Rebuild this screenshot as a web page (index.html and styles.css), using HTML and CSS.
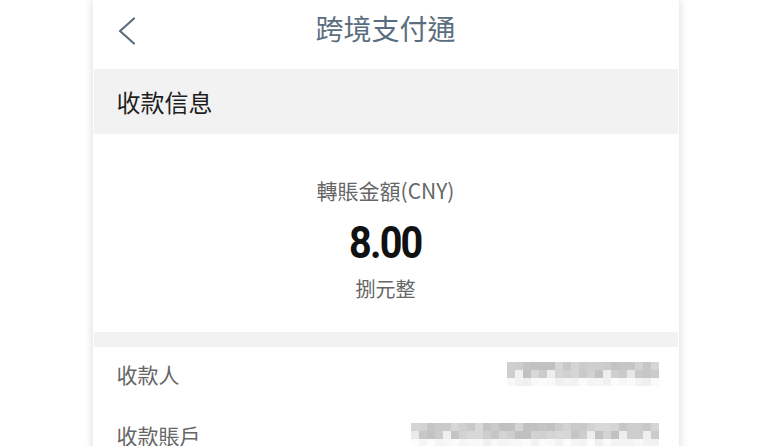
FILE: index.html
```html
<!DOCTYPE html>
<html lang="zh-Hant">
<head>
<meta charset="utf-8">
<title>跨境支付通</title>
<link rel="stylesheet" href="styles.css">
</head>
<body>
<div class="panel">
  <header class="topbar">
    <svg class="back" width="18" height="28" viewBox="0 0 18 28"><polyline points="16,1.5 2,14 16,26.5" fill="none" stroke="#5b6e80" stroke-width="2.2" stroke-linecap="round" stroke-linejoin="round"/></svg>
    <h1 class="title">跨境支付通</h1>
  </header>
  <div class="section-head">收款信息</div>
  <div class="amount">
    <div class="amount-label">轉賬金額(CNY)</div>
    <div class="amount-value">8.00</div>
    <div class="amount-words">捌元整</div>
  </div>
  <div class="divider"></div>
  <div class="row">
    <span class="row-label">收款人</span>
    <span class="blur" data-cols="19" data-seed="7"></span>
  </div>
  <div class="row">
    <span class="row-label">收款賬戶</span>
    <span class="blur" data-cols="31" data-seed="23"></span>
  </div>
</div>
<script src="script.js"></script>
</body>
</html>
```
FILE: styles.css
```css
html, body {
  margin: 0;
  padding: 0;
  background: #ffffff;
  height: 446px;
  overflow: hidden;
}
body {
  font-family: "Noto Sans CJK TC", "Noto Sans CJK SC", "Noto Sans", sans-serif;
}
.panel {
  width: 586px;
  margin: 0 auto;
  background: #ffffff;
  min-height: 446px;
  box-shadow: 0 0 9px rgba(0, 0, 0, 0.16);
}
.topbar {
  position: relative;
  height: 69px;
  display: flex;
  align-items: center;
  justify-content: center;
}
.back {
  position: absolute;
  left: 25px;
  top: 17px;
}
.title {
  margin: 0;
  font-size: 28px;
  font-weight: 400;
  color: #5b6e80;
  line-height: 1;
  padding-bottom: 14px;
}
.section-head {
  height: 65px;
  background: #f2f2f2;
  margin: 0 1px;
  display: flex;
  align-items: center;
  padding-left: 23px;
  font-size: 24px;
  color: #1e1e1e;
}
.amount {
  height: 198px;
  display: flex;
  flex-direction: column;
  align-items: center;
}
.amount-label {
  margin-top: 43px;
  font-size: 21px;
  line-height: 26px;
  color: #666666;
}
.amount-value {
  margin-top: 20px;
  font-family: Roboto, "Liberation Sans", sans-serif;
  font-weight: 700;
  font-size: 45px;
  line-height: 40px;
  letter-spacing: -2px;
  color: #111111;
  transform: scaleX(0.88);
}
.amount-words {
  margin-top: 13px;
  font-size: 20px;
  line-height: 26px;
  color: #666666;
}
.divider {
  height: 15px;
  background: #f2f2f2;
  margin: 0 1px;
}
.row {
  height: 53px;
  display: flex;
  align-items: center;
  justify-content: space-between;
  padding: 0 20px 8px 24px;
}
.row-label {
  font-size: 21px;
  color: #666666;
}
.blur {
  display: grid;
  grid-auto-flow: column;
  grid-template-rows: repeat(3, 8px);
  grid-auto-columns: 8px;
}
.blur i {
  display: block;
}
```
FILE: script.js
```js
document.querySelectorAll('.blur').forEach(function (el) {
  var cols = parseInt(el.dataset.cols, 10);
  var s = parseInt(el.dataset.seed, 10);
  function rnd() {
    s = (s * 1103515245 + 12345) % 2147483648;
    return s / 2147483648;
  }
  for (var c = 0; c < cols; c++) {
    for (var r = 0; r < 3; r++) {
      var v;
      if (r < 2) {
        v = 192 + Math.floor(rnd() * 26);
        if (rnd() < 0.1) v = 228 + Math.floor(rnd() * 14);
      } else {
        v = 240 + Math.floor(rnd() * 13);
      }
      var b = document.createElement('i');
      b.style.background = 'rgb(' + v + ',' + v + ',' + v + ')';
      el.appendChild(b);
    }
  }
});
```
